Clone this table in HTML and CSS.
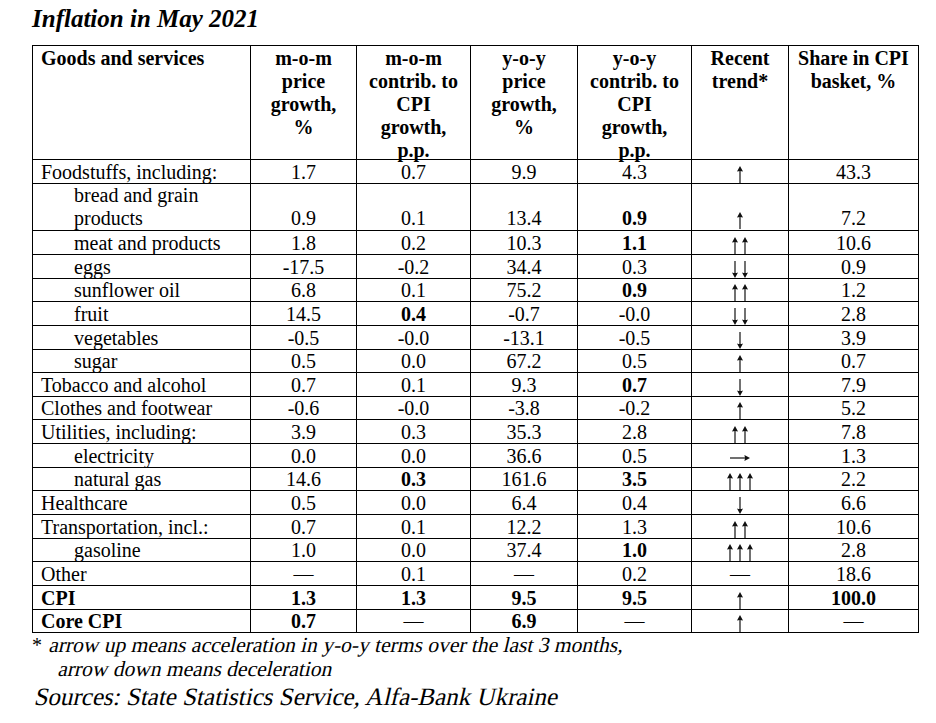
FILE: index.html
```html
<!DOCTYPE html>
<html lang="en">
<head>
<meta charset="utf-8">
<title>Inflation in May 2021</title>
<link rel="stylesheet" href="styles.css">
</head>
<body>
<svg class="defs" width="0" height="0" aria-hidden="true">
  <symbol id="up" viewBox="0 0 8 17">
    <path d="M4 3.5 V17" stroke="#111" stroke-width="1.2" fill="none"/>
    <path d="M4 0 L1 5.6 Q4 4.2 7 5.6 Z" fill="#111"/>
  </symbol>
  <symbol id="down" viewBox="0 0 8 17">
    <path d="M4 0 V13.5" stroke="#111" stroke-width="1.2" fill="none"/>
    <path d="M4 17 L1 11.4 Q4 12.8 7 11.4 Z" fill="#111"/>
  </symbol>
  <symbol id="right" viewBox="0 0 20 8">
    <path d="M0 4 H16.5" stroke="#111" stroke-width="1.2" fill="none"/>
    <path d="M20 4 L14.4 1 Q15.8 4 14.4 7 Z" fill="#111"/>
  </symbol>
</svg>
<div class="page">
  <h1 class="title">Inflation in May 2021</h1>
  <table class="cpi">
    <colgroup>
      <col class="c-name"><col class="c1"><col class="c2"><col class="c3"><col class="c4"><col class="c5"><col class="c6">
    </colgroup>
    <thead>
      <tr class="head">
        <th class="name"><div class="hd">Goods and services</div></th>
        <th><div class="hd">m-o-m<br>price<br>growth,<br>%</div></th>
        <th><div class="hd">m-o-m<br>contrib. to<br>CPI<br>growth,<br>p.p.</div></th>
        <th><div class="hd">y-o-y<br>price<br>growth,<br>%</div></th>
        <th><div class="hd">y-o-y<br>contrib. to<br>CPI<br>growth,<br>p.p.</div></th>
        <th><div class="hd">Recent<br>trend*</div></th>
        <th><div class="hd">Share in CPI<br>basket, %</div></th>
      </tr>
    </thead>
    <tbody>
      <tr class="first"><td class="name">Foodstuffs, including:</td><td>1.7</td><td>0.7</td><td>9.9</td><td>4.3</td><td class="ar"><svg class="au"><use href="#up"/></svg></td><td>43.3</td></tr>
      <tr class="tall"><td class="name sub">bread and grain<br>products</td><td>0.9</td><td>0.1</td><td>13.4</td><td class="b">0.9</td><td class="ar"><svg class="au"><use href="#up"/></svg></td><td>7.2</td></tr>
      <tr><td class="name sub">meat and products</td><td>1.8</td><td>0.2</td><td>10.3</td><td class="b">1.1</td><td class="ar"><svg class="au"><use href="#up"/></svg><svg class="au"><use href="#up"/></svg></td><td>10.6</td></tr>
      <tr><td class="name sub">eggs</td><td>-17.5</td><td>-0.2</td><td>34.4</td><td>0.3</td><td class="ar"><svg class="au"><use href="#down"/></svg><svg class="au"><use href="#down"/></svg></td><td>0.9</td></tr>
      <tr><td class="name sub">sunflower oil</td><td>6.8</td><td>0.1</td><td>75.2</td><td class="b">0.9</td><td class="ar"><svg class="au"><use href="#up"/></svg><svg class="au"><use href="#up"/></svg></td><td>1.2</td></tr>
      <tr><td class="name sub">fruit</td><td>14.5</td><td class="b">0.4</td><td>-0.7</td><td>-0.0</td><td class="ar"><svg class="au"><use href="#down"/></svg><svg class="au"><use href="#down"/></svg></td><td>2.8</td></tr>
      <tr><td class="name sub">vegetables</td><td>-0.5</td><td>-0.0</td><td>-13.1</td><td>-0.5</td><td class="ar"><svg class="au"><use href="#down"/></svg></td><td>3.9</td></tr>
      <tr><td class="name sub">sugar</td><td>0.5</td><td>0.0</td><td>67.2</td><td>0.5</td><td class="ar"><svg class="au"><use href="#up"/></svg></td><td>0.7</td></tr>
      <tr><td class="name">Tobacco and alcohol</td><td>0.7</td><td>0.1</td><td>9.3</td><td class="b">0.7</td><td class="ar"><svg class="au"><use href="#down"/></svg></td><td>7.9</td></tr>
      <tr><td class="name">Clothes and footwear</td><td>-0.6</td><td>-0.0</td><td>-3.8</td><td>-0.2</td><td class="ar"><svg class="au"><use href="#up"/></svg></td><td>5.2</td></tr>
      <tr><td class="name">Utilities, including:</td><td>3.9</td><td>0.3</td><td>35.3</td><td>2.8</td><td class="ar"><svg class="au"><use href="#up"/></svg><svg class="au"><use href="#up"/></svg></td><td>7.8</td></tr>
      <tr><td class="name sub">electricity</td><td>0.0</td><td>0.0</td><td>36.6</td><td>0.5</td><td class="ar"><svg class="ar-r"><use href="#right"/></svg></td><td>1.3</td></tr>
      <tr><td class="name sub">natural gas</td><td>14.6</td><td class="b">0.3</td><td>161.6</td><td class="b">3.5</td><td class="ar"><svg class="au"><use href="#up"/></svg><svg class="au"><use href="#up"/></svg><svg class="au"><use href="#up"/></svg></td><td>2.2</td></tr>
      <tr><td class="name">Healthcare</td><td>0.5</td><td>0.0</td><td>6.4</td><td>0.4</td><td class="ar"><svg class="au"><use href="#down"/></svg></td><td>6.6</td></tr>
      <tr><td class="name">Transportation, incl.:</td><td>0.7</td><td>0.1</td><td>12.2</td><td>1.3</td><td class="ar"><svg class="au"><use href="#up"/></svg><svg class="au"><use href="#up"/></svg></td><td>10.6</td></tr>
      <tr><td class="name sub">gasoline</td><td>1.0</td><td>0.0</td><td>37.4</td><td class="b">1.0</td><td class="ar"><svg class="au"><use href="#up"/></svg><svg class="au"><use href="#up"/></svg><svg class="au"><use href="#up"/></svg></td><td>2.8</td></tr>
      <tr><td class="name">Other</td><td>—</td><td>0.1</td><td>—</td><td>0.2</td><td>—</td><td>18.6</td></tr>
      <tr class="total"><td class="name">CPI</td><td>1.3</td><td>1.3</td><td>9.5</td><td>9.5</td><td class="ar"><svg class="au"><use href="#up"/></svg></td><td>100.0</td></tr>
      <tr class="core"><td class="name">Core CPI</td><td>0.7</td><td class="nb">—</td><td>6.9</td><td class="nb">—</td><td class="ar"><svg class="au"><use href="#up"/></svg></td><td class="nb">—</td></tr>
    </tbody>
  </table>
  <p class="note"><span class="star">*</span> <span class="it">arrow up means acceleration in y-o-y terms over the last 3 months,</span><br><span class="indent it">arrow down means deceleration</span></p>
  <p class="sources"><span class="it">Sources: State Statistics Service, Alfa-Bank Ukraine</span></p>
</div>
</body>
</html>
```

FILE: styles.css
```css
html, body {
  margin: 0;
  padding: 0;
  background: #fff;
  color: #000;
}

.defs {
  position: absolute;
  width: 0;
  height: 0;
  overflow: hidden;
}

.page {
  padding: 4px 0 0 32px;
  font-family: "Liberation Serif", "Times New Roman", serif;
}

.title {
  margin: 0;
  font-size: 25px;
  line-height: 30px;
  font-weight: bold;
  font-style: italic;
  height: 41px;
}

.cpi {
  border-collapse: collapse;
  table-layout: fixed;
  width: 886px;
  font-size: 20px;
}

.c-name { width: 218px; }
.c1 { width: 106px; }
.c2 { width: 114px; }
.c3 { width: 107px; }
.c4 { width: 114px; }
.c5 { width: 97px; }
.c6 { width: 130px; }

.cpi th,
.cpi td {
  border: 1px solid #000;
  padding: 0;
  text-align: center;
  white-space: nowrap;
}

.cpi th {
  vertical-align: top;
  font-weight: bold;
  line-height: 23px;
}

.hd {
  height: 113px;
  padding-top: 0.5px;
  box-sizing: border-box;
}

.cpi td {
  vertical-align: bottom;
  line-height: 22px;
  height: 22.65px;
}

.cpi tr.first td {
  height: 23px;
}

.cpi tr.tall td {
  height: 46.3px;
  line-height: 23px;
}

.cpi .name {
  text-align: left;
  padding-left: 8px;
}

.cpi .sub {
  padding-left: 41px;
}

.cpi .b {
  font-weight: bold;
}

.cpi .total td,
.cpi .core td {
  font-weight: bold;
}

.cpi .core td.nb {
  font-weight: normal;
}

.au {
  display: inline-block;
  width: 8px;
  height: 17px;
  margin: 0 1px;
  vertical-align: -4px;
}

.ar-r {
  display: inline-block;
  width: 20px;
  height: 8px;
  vertical-align: 1px;
}

.it {
  display: inline-block;
  transform: skewX(-13deg);
  transform-origin: 0 100%;
}

.note {
  margin: 0;
  font-size: 21.5px;
  line-height: 24px;
}

.note .star {
  font-size: 20px;
}

.note .indent {
  padding-left: 24px;
}

.sources {
  margin: 2px 0 0 0;
  font-size: 25px;
  line-height: 28px;
}
```
